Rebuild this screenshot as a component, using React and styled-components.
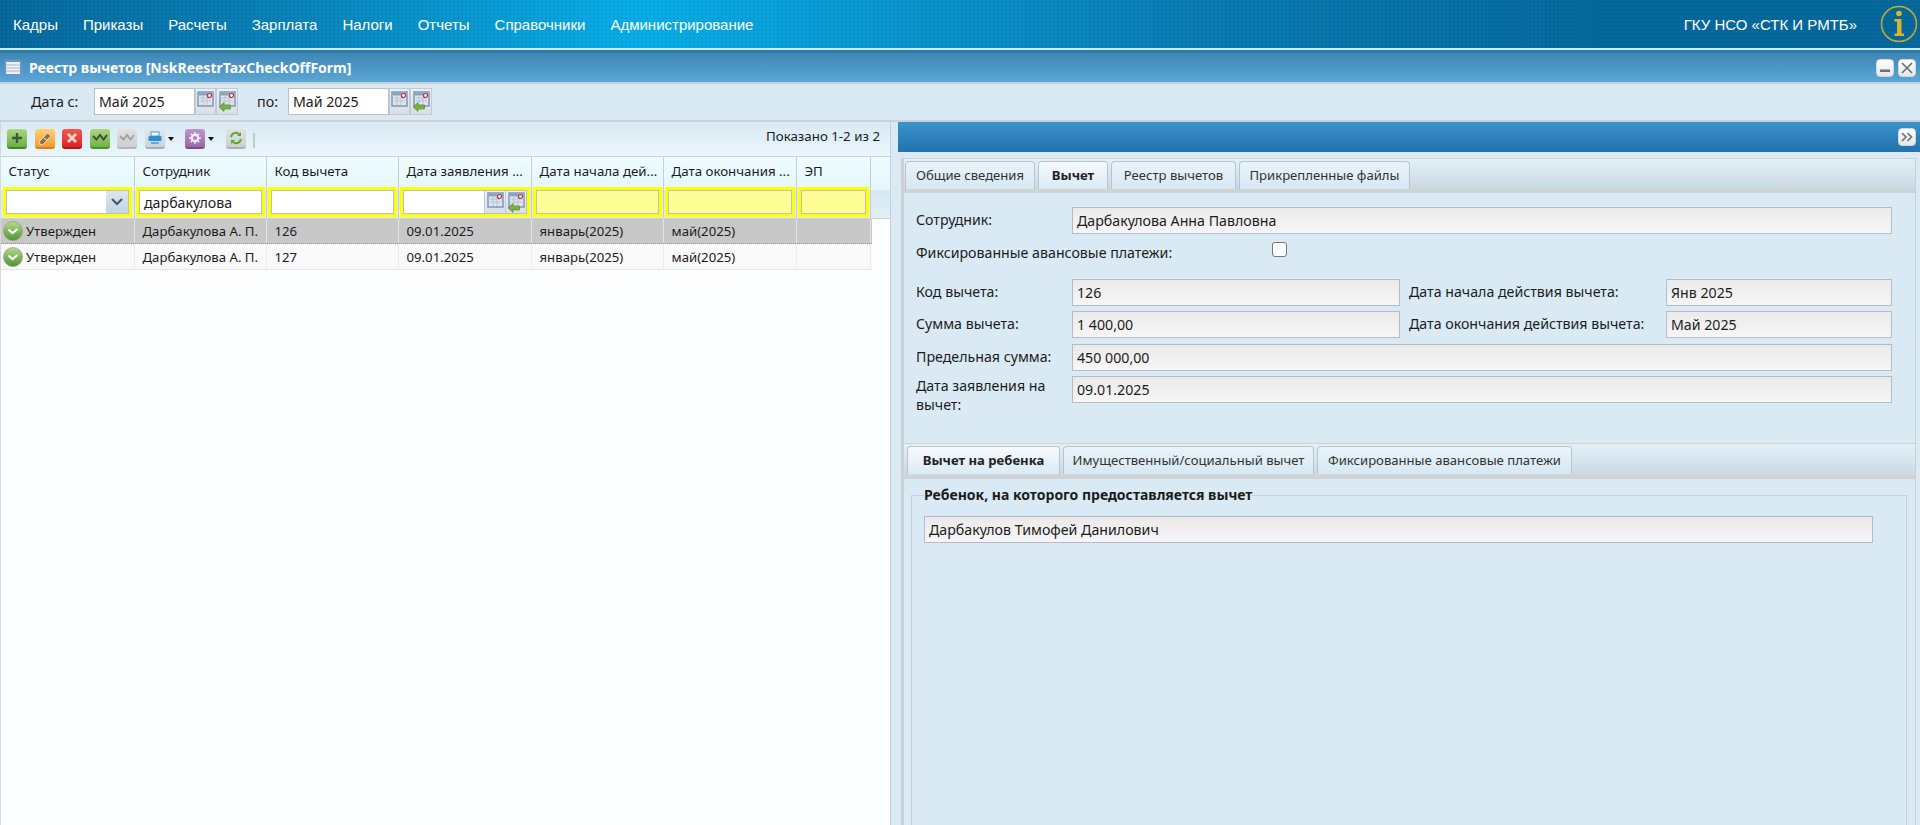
import styled, { createGlobalStyle } from "styled-components";

const GlobalStyle = createGlobalStyle`
  html, body {
    margin: 0;
    padding: 0;
    height: 100%;
    overflow: hidden;
    background: #daeaf4;
  }
  * {
    box-sizing: border-box;
  }
  body {
    font-family: "Noto Sans", "DejaVu Sans", sans-serif;
    font-size: 13.5px;
    color: #1c1c1c;
  }
`;

const Page = styled.div`
  width: 1920px;
  height: 825px;
  display: flex;
  flex-direction: column;
  overflow: hidden;
`;

const TopBar = styled.div`
  height: 53px;
  flex: none;
  display: flex;
  align-items: flex-start;
  padding: 0 0 0 13px;
  color: #fff;
  font-family: "Liberation Sans", Arial, sans-serif;
  font-size: 15px;
  border-bottom: 3px solid #2f7aa8;
  background-image:
    radial-gradient(rgba(0, 40, 80, 0.1) 1px, transparent 1px),
    linear-gradient(90deg, #07689b 0, #0a84ba 300px, #08aee8 640px, #0a95cd 900px, #0a7cb2 1200px, #06699c 1600px);
  background-size: 4px 4px, 100% 100%;
  position: relative;
`;

const TopLine = styled.div`
  position: absolute;
  left: 0;
  right: 0;
  bottom: 0;
  height: 2px;
  background: #c8f0ff;
`;

const NavItem = styled.div`
  margin-right: 25px;
  line-height: 49px;
`;

const TopRight = styled.div`
  margin-left: auto;
  display: flex;
  align-items: center;
  height: 48px;
  gap: 23px;
  padding-right: 2px;
`;

const WindowTitle = styled.div`
  height: 29px;
  flex: none;
  display: flex;
  align-items: center;
  padding: 0 4px;
  color: #fff;
  font-weight: 700;
  font-size: 14px;
  background: linear-gradient(180deg, #3f87b5, #5ba6d6);
`;

const TitleText = styled.div`
  margin-left: 7px;
`;

const WinButtons = styled.div`
  margin-left: auto;
  display: flex;
  gap: 4px;
`;

const SmallButton = styled.div`
  width: 18px;
  height: 18px;
  border-radius: 4px;
  background: linear-gradient(180deg, #fff, #e3e7ea);
  border: 1px solid #cfd8de;
  display: flex;
  align-items: center;
  justify-content: center;
`;

const DateBar = styled.div`
  height: 40px;
  flex: none;
  display: flex;
  align-items: center;
  padding: 0 0 2px 31px;
  background: #daeaf4;
  border-top: 2px solid #c9ced2;
  border-bottom: 2px solid #cdd1d4;
`;

const DateLabel = styled.div`
  width: ${(p) => p.$w}px;
  margin-left: ${(p) => p.$ml || 0}px;
  font-size: 14.3px;
`;

const DateInput = styled.div`
  width: 101px;
  height: 27px;
  padding-left: 4px;
  line-height: 25px;
  background: #fff;
  border: 1px solid #b9bfc9;
  font-size: 14.2px;
`;

const CalButton = styled.div`
  width: ${(p) => p.$w || 21}px;
  height: 27px;
  flex: none;
  display: flex;
  align-items: center;
  justify-content: center;
  background: linear-gradient(180deg, #eef2f5, #d8dfe6);
  border: 1px solid #c3c8d2;
`;

const Split = styled.div`
  flex: 1;
  min-height: 0;
  display: flex;
`;

const LeftPanel = styled.div`
  width: 891px;
  flex: none;
  display: flex;
  flex-direction: column;
  background: #fdfeff;
  border-right: 1px solid #c8ced2;
  border-left: 1px solid #d5d9dc;
`;

const Toolbar = styled.div`
  height: 35px;
  flex: none;
  display: flex;
  align-items: flex-start;
  padding: 7px 10px 0 6px;
  background: linear-gradient(180deg, #d9e9f3, #e9f6fc);
  border-bottom: 1px solid #c9cfd3;
`;

const ToolBtn = styled.div`
  width: 20px;
  height: 20px;
  flex: none;
  margin-left: ${(p) => p.$ml || 0}px;
  border-radius: 3px;
  display: flex;
  align-items: center;
  justify-content: center;
  background: linear-gradient(180deg, ${(p) => p.$top}, ${(p) => p.$bottom});
  border-bottom: 2px solid ${(p) => p.$edge};
`;

const Caret = styled.div`
  width: 0;
  height: 0;
  flex: none;
  margin: 8px 0 0 3px;
  border-left: 3px solid transparent;
  border-right: 3px solid transparent;
  border-top: 4px solid #111;
`;

const ToolSep = styled.div`
  width: 2px;
  height: 15px;
  margin: 4px 0 0 7px;
  background: #bccac9;
`;

const Shown = styled.div`
  margin-left: auto;
  font-size: 13.3px;
  line-height: 14px;
`;

const GridHead = styled.div`
  height: 62px;
  flex: none;
  background: linear-gradient(180deg, #effcff 0, #e4f7fe 33px, #d5e8f2 34px, #e0f0f8 100%);
  border-bottom: 1px solid #cdd2d5;
`;

const COLS = "134px 132px 132px 133px 132px 133px 74px";

const HeadRow = styled.div`
  display: grid;
  grid-template-columns: ${COLS};
  width: 870px;
  height: 30px;
`;

const HeadCell = styled.div`
  padding: 6px 0 0 7.5px;
  font-size: 13.3px;
  line-height: 16px;
  white-space: nowrap;
  overflow: hidden;
  border-right: 1px solid #c8cdd0;
`;

const FilterRow = styled.div`
  display: grid;
  grid-template-columns: ${COLS};
  width: 870px;
  height: 31px;
`;

const FilterCell = styled.div`
  padding: 0 1px 1px 1px;
  border-right: 1px solid #c8cdd0;

  &:first-child {
    padding: 0 2px 1px 2px;
  }
`;

const FilterBox = styled.div`
  height: 30px;
  display: flex;
  border: 3px solid #ffff00;
  background: ${(p) => (p.$filled ? "#fdfc95" : "#fff")};
  box-shadow: inset 0 0 0 1px #b9c0cb;
  padding: 1px;
  font-size: 14.2px;
  line-height: 24px;
`;

const FilterText = styled.div`
  flex: 1;
  padding-left: 4px;
`;

const ComboBtn = styled.div`
  width: 22px;
  display: flex;
  align-items: center;
  justify-content: center;
  background: linear-gradient(180deg, #dde7ee, #c3d5e0);
`;

const MiniCal = styled.div`
  width: 21px;
  flex: none;
  display: flex;
  align-items: center;
  justify-content: center;
  background: linear-gradient(180deg, #eef2f5, #d8dfe6);
  border-left: 1px solid #c3c8d2;
`;

const Row = styled.div`
  display: grid;
  grid-template-columns: ${COLS};
  width: 871px;
  height: ${(p) => (p.$selected ? 25 : 26)}px;
  background: ${(p) => (p.$selected ? "#c8c8c8" : "#f9f9f9")};
  border-bottom: 1px ${(p) => (p.$selected ? "dotted #8e8e8e" : "solid #e4e4e4")};
`;

const Cell = styled.div`
  display: flex;
  align-items: center;
  gap: 3px;
  padding-left: ${(p) => (p.$status ? 2 : 7.5)}px;
  font-size: 13.2px;
  white-space: nowrap;
  overflow: hidden;
  border-right: 1px solid ${(p) => (p.$selected ? "#e3e3e3" : "#ececec")};
`;

const RightPanel = styled.div`
  flex: 1;
  min-width: 0;
  display: flex;
  flex-direction: column;
  padding: 0 0 0 7px;
`;

const PanelHead = styled.div`
  height: 30px;
  flex: none;
  display: flex;
  align-items: center;
  justify-content: flex-end;
  padding-right: 4px;
  background: linear-gradient(180deg, #3a93ca, #2272ab);
`;

const PanelBody = styled.div`
  flex: 1;
  min-height: 0;
  display: flex;
  flex-direction: column;
  margin: 6px 4px 0 3px;
  border-right: 1px solid #cbd0d3;
`;

const TabStrip = styled.div`
  flex: none;
  height: ${(p) => p.$h}px;
  display: flex;
  gap: 3px;
  padding: ${(p) => p.$pt}px 0 0 ${(p) => p.$pl}px;
  background: linear-gradient(180deg, #e3f0f8, #c9d9e3);
  border-top: 1px solid #ced3d6;
  border-left: 3px solid #cbd0d3;
  border-bottom: 4px solid #cfd3d6;
`;

const Tab = styled.div`
  width: ${(p) => p.$w}px;
  height: ${(p) => p.$h}px;
  text-align: center;
  font-size: 13.1px;
  font-weight: ${(p) => (p.$active ? 700 : 400)};
  line-height: ${(p) => p.$h - 2}px;
  white-space: nowrap;
  color: ${(p) => (p.$active ? "#222" : "#333")};
  background: ${(p) => (p.$active ? "linear-gradient(180deg, #f6fbfe, #daeaf4)" : "linear-gradient(180deg, #e9f4fa, #d6e8f3)")};
  border: 1px solid #b8c5ce;
  border-bottom: 0;
  border-radius: 4px 4px 0 0;
`;

const FormArea = styled.div`
  flex: none;
  height: 250px;
  padding: 14px 23px 0 12px;
  background: #daeaf4;
  border-left: 3px solid #cbd0d3;
`;

const FormRow = styled.div`
  display: flex;
  align-items: ${(p) => p.$align || "center"};
  margin-top: ${(p) => p.$mt || 0}px;
`;

const FormLabel = styled.div`
  width: ${(p) => p.$w || 156}px;
  flex: none;
  margin-left: ${(p) => p.$ml || 0}px;
  padding-bottom: 3px;
  font-size: 14.2px;
  line-height: 19px;
`;

const ReadField = styled.div`
  flex: ${(p) => (p.$w ? "none" : 1)};
  width: ${(p) => (p.$w ? `${p.$w}px` : "auto")};
  height: 27px;
  padding-left: 4px;
  font-size: 14.2px;
  line-height: 25px;
  background: linear-gradient(180deg, #eaeaea, #f6f6f6);
  border: 1px solid #b6bbca;
`;

const CheckBox = styled.input`
  appearance: none;
  width: 15px;
  height: 15px;
  margin: -1px 0 0;
  background: #fff;
  border: 1px solid #767676;
  border-radius: 3px;
`;

const CheckLine = styled.div`
  flex: none;
  height: 45px;
  padding-top: 9px;
`;

const LowerArea = styled.div`
  flex: 1;
  min-height: 0;
  padding: 7px 8px 0 7px;
  background: #daeaf4;
  border-left: 3px solid #cbd0d3;
`;

const FieldGroup = styled.fieldset`
  height: 400px;
  margin: 0;
  padding: 12px 33px 0 12px;
  border: 1px solid #c8cfd4;
  border-bottom: 0;
`;

const GroupTitle = styled.legend`
  padding: 0;
  font-size: 14px;
  font-weight: 700;
  line-height: 18px;
`;

function CalendarIcon({ arrow }) {
  return (
    <svg width="17" height="21" viewBox="0 0 17 21">
      <rect x="1" y="1" width="15" height="14" fill="#dce4ee" stroke="#7f97b8" strokeWidth="1.5" />
      <rect x="2" y="2" width="13" height="2.5" fill="#8aa2c2" />
      <path d="M3 7h11M3 10h11M6 5v9M10 5v9" stroke="#b9c3cf" strokeWidth="1" />
      <circle cx="12.5" cy="4.5" r="2" fill="#fff" stroke="#b5303c" strokeWidth="1.2" />
      {arrow && (
        <path d="M0 16l5-4.5v2.4h6.5v4.2H5V20.500z" fill="#76b043" stroke="#4f8f28" strokeWidth="0.6" />
      )}
    </svg>
  );
}

function TableIcon() {
  return (
    <svg width="18" height="17" viewBox="0 0 18 17">
      <rect x="0.500" y="0.500" width="17" height="16" rx="2" fill="#6f93c9" />
      <rect x="2" y="3" width="14" height="12" fill="#eef2f6" />
      <path d="M2 6h14M2 9h14M2 12h14" stroke="#a9b5c4" strokeWidth="1" />
    </svg>
  );
}

function InfoIcon() {
  return (
    <svg width="38" height="38" viewBox="0 0 38 38">
      <circle cx="19" cy="19" r="17.500" fill="none" stroke="#c9ab2c" strokeWidth="1.500" />
      <circle cx="19" cy="8.500" r="2.800" fill="#d8b62a" />
      <path d="M14.500 14h7v14.500h2.500V31H14.500v-2.500H17V16.500h-2.500z" fill="#d8b62a" />
    </svg>
  );
}

function StatusIcon() {
  return (
    <svg width="20" height="20" viewBox="0 0 20 20">
      <defs>
        <linearGradient id="okFill" x1="0" y1="0" x2="0" y2="1">
          <stop offset="0" stopColor="#b4d98c" />
          <stop offset="1" stopColor="#4f9430" />
        </linearGradient>
      </defs>
      <circle cx="10" cy="10" r="9.500" fill="url(#okFill)" stroke="#8f9c88" strokeWidth="0.700" />
      <path d="M5.500 8.500l4 3.500 5-4" fill="none" stroke="#fff" strokeWidth="2.200" />
    </svg>
  );
}

const navItems = ["Кадры", "Приказы", "Расчеты", "Зарплата", "Налоги", "Отчеты", "Справочники", "Администрирование"];

const rows = [
  { code: "126", selected: true },
  { code: "127", selected: false },
];

export default function App() {
  return (
    <Page>
      <GlobalStyle />
      <TopBar>
        {navItems.map((item) => (
          <NavItem key={item}>{item}</NavItem>
        ))}
        <TopRight>
          <div>ГКУ НСО «СТК И РМТБ»</div>
          <InfoIcon />
        </TopRight>
        <TopLine />
      </TopBar>

      <WindowTitle>
        <TableIcon />
        <TitleText>Реестр вычетов [NskReestrTaxCheckOffForm]</TitleText>
        <WinButtons>
          <SmallButton>
            <svg width="10" height="10" viewBox="0 0 10 10">
              <rect x="0" y="6.500" width="10" height="2.500" fill="#6b7178" />
            </svg>
          </SmallButton>
          <SmallButton>
            <svg width="12" height="12" viewBox="0 0 12 12">
              <path d="M1 1l10 10M11 1L1 11" stroke="#6b7178" strokeWidth="1.700" />
            </svg>
          </SmallButton>
        </WinButtons>
      </WindowTitle>

      <DateBar>
        <DateLabel $w={63}>Дата с:</DateLabel>
        <DateInput>Май 2025</DateInput>
        <CalButton>
          <CalendarIcon />
        </CalButton>
        <CalButton $w={22}>
          <CalendarIcon arrow />
        </CalButton>
        <DateLabel $w={31} $ml={19}>по:</DateLabel>
        <DateInput>Май 2025</DateInput>
        <CalButton>
          <CalendarIcon />
        </CalButton>
        <CalButton $w={22}>
          <CalendarIcon arrow />
        </CalButton>
      </DateBar>

      <Split>
        <LeftPanel>
          <Toolbar>
            <ToolBtn $top="#a9d77e" $bottom="#6fae45" $edge="#3f8a1f">
              <svg width="12" height="12" viewBox="0 0 12 12">
                <path d="M6 1v10M1 6h10" stroke="#40583a" strokeWidth="2.400" />
              </svg>
            </ToolBtn>
            <ToolBtn $ml={8} $top="#ffcf73" $bottom="#f59b2c" $edge="#d97f16">
              <svg width="14" height="14" viewBox="0 0 14 14">
                <path d="M1.500 10.500L9.500 2 13 5l-8 8.500H2z" fill="#8d7049" stroke="#fff1d0" strokeWidth="0.800" />
                <path d="M6 7l3 2.500" stroke="#fff1d0" strokeWidth="1" />
              </svg>
            </ToolBtn>
            <ToolBtn $ml={7} $top="#f15a4f" $bottom="#dd2222" $edge="#ad1616">
              <svg width="12" height="12" viewBox="0 0 12 12">
                <path d="M2 2l8 8M10 2l-8 8" stroke="#f3d2c9" strokeWidth="2.800" />
              </svg>
            </ToolBtn>
            <ToolBtn $ml={8} $top="#a9d77e" $bottom="#74b24a" $edge="#4a9426">
              <svg width="16" height="12" viewBox="0 0 16 12">
                <path d="M1 4l3.500 3.500L8 3l3.500 4.500L15 3" fill="none" stroke="#3f4f3a" strokeWidth="2" />
              </svg>
            </ToolBtn>
            <ToolBtn $ml={7} $top="#e1e1e1" $bottom="#cfcfcf" $edge="#b6b6b6">
              <svg width="16" height="12" viewBox="0 0 16 12">
                <path d="M1 4l3.500 3.500L8 3l3.500 4.500L15 3" fill="none" stroke="#a3a3a3" strokeWidth="2" />
              </svg>
            </ToolBtn>
            <ToolBtn $ml={8} $top="#e4e7ea" $bottom="#cdd2d7" $edge="#a9aeb4">
              <svg width="14" height="14" viewBox="0 0 14 14">
                <rect x="3" y="1" width="8" height="4" fill="#fff" stroke="#3d94d6" />
                <rect x="0.500" y="5" width="13" height="5" rx="1" fill="#2f8dd6" />
                <rect x="3" y="11" width="8" height="2" fill="#5aa8e3" />
              </svg>
            </ToolBtn>
            <Caret />
            <ToolBtn $ml={11} $top="#c094c9" $bottom="#9a6aa8" $edge="#7c4f8b">
              <svg width="12" height="12" viewBox="0 0 12 12">
                <circle cx="6" cy="6" r="3.200" fill="none" stroke="#f5eaf7" strokeWidth="2.400" />
                <path d="M6 0v2M6 10v2M0 6h2M10 6h2M1.800 1.800l1.400 1.400M8.800 8.800l1.400 1.400M1.800 10.200l1.400-1.400M8.800 3.200l1.400-1.400" stroke="#f5eaf7" strokeWidth="1.500" />
              </svg>
            </ToolBtn>
            <Caret />
            <ToolBtn $ml={12} $top="#e1e1e1" $bottom="#cfcfcf" $edge="#afafaf">
              <svg width="14" height="14" viewBox="0 0 14 14">
                <path d="M2 6a5 5 0 0 1 9-2M12 8a5 5 0 0 1-9 2" fill="none" stroke="#58ab34" strokeWidth="2" />
                <path d="M12 1v4H8zM2 13V9h4z" fill="#58ab34" />
              </svg>
            </ToolBtn>
            <ToolSep />
            <Shown>Показано 1-2 из 2</Shown>
          </Toolbar>

          <GridHead>
            <HeadRow>
              <HeadCell>Статус</HeadCell>
              <HeadCell>Сотрудник</HeadCell>
              <HeadCell>Код вычета</HeadCell>
              <HeadCell>Дата заявления ...</HeadCell>
              <HeadCell>Дата начала дей...</HeadCell>
              <HeadCell>Дата окончания ...</HeadCell>
              <HeadCell>ЭП</HeadCell>
            </HeadRow>
            <FilterRow>
              <FilterCell>
                <FilterBox>
                  <FilterText />
                  <ComboBtn>
                    <svg width="12" height="8" viewBox="0 0 12 8">
                      <path d="M1 1l5 5 5-5" fill="none" stroke="#4b5a68" strokeWidth="2.200" />
                    </svg>
                  </ComboBtn>
                </FilterBox>
              </FilterCell>
              <FilterCell>
                <FilterBox>
                  <FilterText>дарбакулова</FilterText>
                </FilterBox>
              </FilterCell>
              <FilterCell>
                <FilterBox />
              </FilterCell>
              <FilterCell>
                <FilterBox>
                  <FilterText />
                  <MiniCal>
                    <CalendarIcon />
                  </MiniCal>
                  <MiniCal>
                    <CalendarIcon arrow />
                  </MiniCal>
                </FilterBox>
              </FilterCell>
              <FilterCell>
                <FilterBox $filled />
              </FilterCell>
              <FilterCell>
                <FilterBox $filled />
              </FilterCell>
              <FilterCell>
                <FilterBox $filled />
              </FilterCell>
            </FilterRow>
          </GridHead>

          {rows.map((row) => (
            <Row key={row.code} $selected={row.selected}>
              <Cell $status $selected={row.selected}>
                <StatusIcon />
                Утвержден
              </Cell>
              <Cell $selected={row.selected}>Дарбакулова А. П.</Cell>
              <Cell $selected={row.selected}>{row.code}</Cell>
              <Cell $selected={row.selected}>09.01.2025</Cell>
              <Cell $selected={row.selected}>январь(2025)</Cell>
              <Cell $selected={row.selected}>май(2025)</Cell>
              <Cell $selected={row.selected} />
            </Row>
          ))}
        </LeftPanel>

        <RightPanel>
          <PanelHead>
            <SmallButton>
              <svg width="12" height="10" viewBox="0 0 12 10">
                <path d="M1 1l4 4-4 4M6.500 1l4 4-4 4" fill="none" stroke="#69737c" strokeWidth="1.700" />
              </svg>
            </SmallButton>
          </PanelHead>

          <PanelBody>
            <TabStrip $h={35} $pt={2} $pl={1}>
              <Tab $w={130} $h={28}>Общие сведения</Tab>
              <Tab $w={70} $h={28} $active>Вычет</Tab>
              <Tab $w={125} $h={28}>Реестр вычетов</Tab>
              <Tab $w={171} $h={28}>Прикрепленные файлы</Tab>
            </TabStrip>

            <FormArea>
              <FormRow>
                <FormLabel>Сотрудник:</FormLabel>
                <ReadField>Дарбакулова Анна Павловна</ReadField>
              </FormRow>
              <CheckLine>
                <FormRow $align="flex-start">
                  <FormLabel $w={356}>Фиксированные авансовые платежи:</FormLabel>
                  <CheckBox type="checkbox" readOnly />
                </FormRow>
              </CheckLine>
              <FormRow>
                <FormLabel>Код вычета:</FormLabel>
                <ReadField $w={328}>126</ReadField>
                <FormLabel $w={257} $ml={9}>Дата начала действия вычета:</FormLabel>
                <ReadField>Янв 2025</ReadField>
              </FormRow>
              <FormRow $mt={5}>
                <FormLabel>Сумма вычета:</FormLabel>
                <ReadField $w={328}>1 400,00</ReadField>
                <FormLabel $w={257} $ml={9}>Дата окончания действия вычета:</FormLabel>
                <ReadField>Май 2025</ReadField>
              </FormRow>
              <FormRow $mt={6}>
                <FormLabel>Предельная сумма:</FormLabel>
                <ReadField>450 000,00</ReadField>
              </FormRow>
              <FormRow $mt={5} $align="flex-start">
                <FormLabel>
                  Дата заявления на
                  <br />
                  вычет:
                </FormLabel>
                <ReadField>09.01.2025</ReadField>
              </FormRow>
            </FormArea>

            <TabStrip $h={36} $pt={2} $pl={3}>
              <Tab $w={153} $h={28} $active>Вычет на ребенка</Tab>
              <Tab $w={251} $h={28}>Имущественный/социальный вычет</Tab>
              <Tab $w={255} $h={28}>Фиксированные авансовые платежи</Tab>
            </TabStrip>

            <LowerArea>
              <FieldGroup>
                <GroupTitle>Ребенок, на которого предоставляется вычет</GroupTitle>
                <ReadField>Дарбакулов Тимофей Данилович</ReadField>
              </FieldGroup>
            </LowerArea>
          </PanelBody>
        </RightPanel>
      </Split>
    </Page>
  );
}
